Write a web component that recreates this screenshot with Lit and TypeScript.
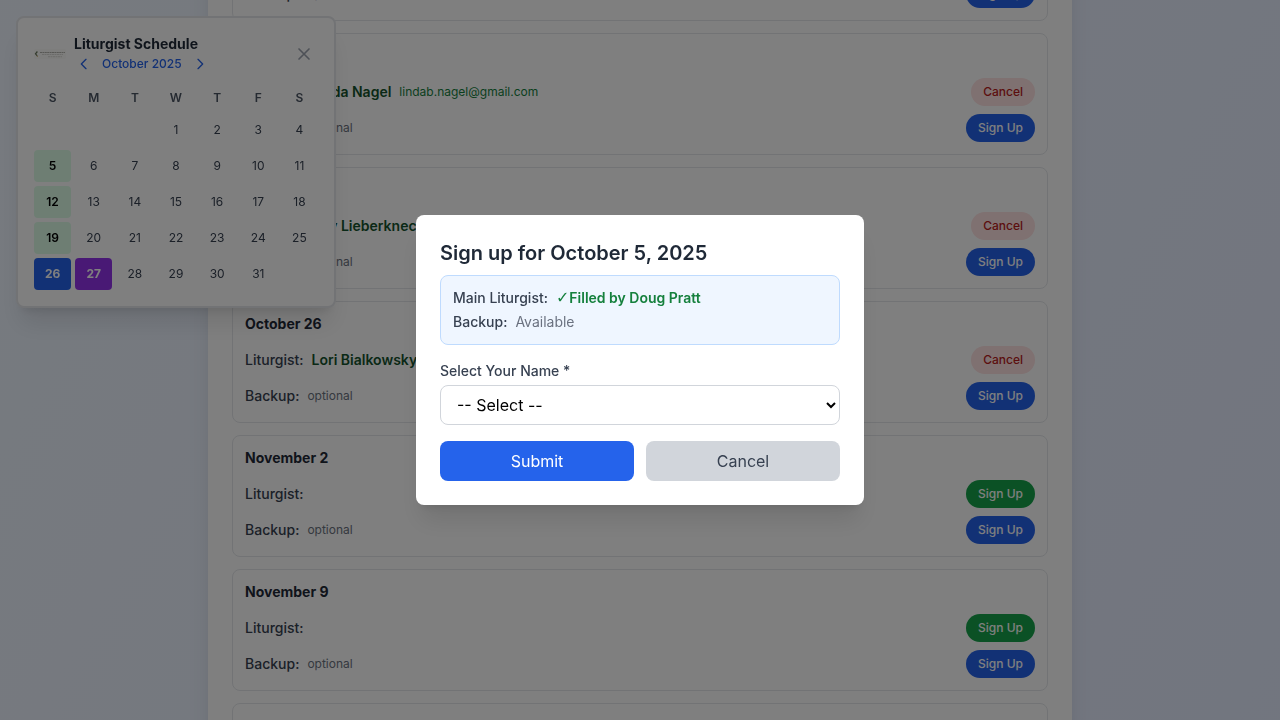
import { LitElement, html, css, svg, nothing } from "lit";
import { customElement, property, query, state } from "lit/decorators.js";
import { classMap } from "lit/directives/class-map.js";

interface Service {
  date: string;
  liturgist?: string;
  email?: string;
}

const SERVICES: Service[] = [
  { date: "October 5", liturgist: "Doug Pratt" },
  { date: "October 12", liturgist: "Linda Nagel", email: "lindab.nagel@gmail.com" },
  { date: "October 19", liturgist: "Kay Lieberknecht" },
  { date: "October 26", liturgist: "Lori Bialkowsky" },
  { date: "November 2" },
  { date: "November 9" },
  { date: "November 16" },
];

const shared = css`
  *,
  *::before,
  *::after {
    box-sizing: border-box;
  }
  h1,
  h2,
  h3,
  p {
    margin: 0;
  }
  button,
  select {
    font: inherit;
    margin: 0;
    cursor: pointer;
  }
  button {
    border: 0;
    padding: 0;
    background: none;
  }
`;

@customElement("service-card")
class ServiceCard extends LitElement {
  @property({ attribute: false }) service!: Service;

  static styles = [
    shared,
    css`
      :host {
        display: block;
        padding: 12px;
        border: 1px solid #e5e7eb;
        border-radius: 8px;
        font-size: 14px;
        line-height: 20px;
      }
      .date {
        margin-bottom: 12px;
        font-size: 14px;
        font-weight: 700;
        color: #1f2937;
      }
      .row {
        display: flex;
        align-items: center;
        gap: 8px;
        min-height: 28px;
      }
      .row + .row {
        margin-top: 8px;
      }
      .role {
        font-weight: 500;
        color: #374151;
      }
      .name {
        font-weight: 600;
        color: #14532d;
      }
      .email {
        font-size: 12px;
        color: #15803d;
      }
      .optional {
        font-size: 12px;
        color: #6b7280;
      }
      .action {
        margin-left: auto;
        padding: 6px 12px;
        border-radius: 999px;
        font-size: 12px;
        line-height: 16px;
        font-weight: 500;
        color: #ffffff;
      }
      .cancel {
        background: #fee2e2;
        color: #b91c1c;
      }
      .main {
        background: #16a34a;
      }
      .backup {
        background: #2563eb;
      }
    `,
  ];

  render() {
    const { date, liturgist, email } = this.service;
    return html`
      <h3 class="date">${date}</h3>
      <div class="row">
        <span class="role">Liturgist:</span>
        ${liturgist ? html`<span class="name">${liturgist}</span>` : nothing}
        ${email ? html`<span class="email">${email}</span>` : nothing}
        ${liturgist
          ? html`<button class="action cancel">Cancel</button>`
          : html`<button class="action main">Sign Up</button>`}
      </div>
      <div class="row">
        <span class="role">Backup:</span>
        <span class="optional">optional</span>
        <button class="action backup">Sign Up</button>
      </div>
    `;
  }
}

@customElement("month-calendar")
class MonthCalendar extends LitElement {
  static styles = [
    shared,
    css`
      :host {
        display: block;
        padding: 16px;
        background: #ffffff;
        border: 2px solid #e5e7eb;
        border-radius: 8px;
        box-shadow: 0 20px 25px -5px rgba(0, 0, 0, 0.1),
          0 8px 10px -6px rgba(0, 0, 0, 0.1);
      }
      .head {
        display: flex;
        align-items: center;
        gap: 8px;
        margin-bottom: 12px;
      }
      .logo {
        display: block;
        width: 32px;
        height: 10px;
      }
      .titles {
        flex: 1;
      }
      .title {
        font-size: 14px;
        line-height: 20px;
        font-weight: 700;
        color: #1f2937;
      }
      .month {
        display: flex;
        align-items: center;
        gap: 8px;
        font-size: 12px;
        line-height: 16px;
        font-weight: 500;
        color: #2563eb;
      }
      .icon {
        display: block;
        fill: none;
        stroke: currentColor;
        stroke-width: 2;
        stroke-linecap: round;
        stroke-linejoin: round;
      }
      .nav {
        padding: 2px;
        color: #2563eb;
      }
      .nav .icon {
        width: 16px;
        height: 16px;
      }
      .close {
        padding: 4px;
        color: #9ca3af;
      }
      .close .icon {
        width: 20px;
        height: 20px;
      }
      .grid {
        display: grid;
        grid-template-columns: repeat(7, 1fr);
        gap: 4px;
        font-size: 12px;
        line-height: 16px;
        text-align: center;
      }
      .weekday {
        padding: 4px 0;
        font-weight: 600;
        color: #4b5563;
      }
      .day {
        height: 32px;
        border-radius: 4px;
        color: #374151;
      }
      .filled {
        background: #dcfce7;
        color: #000000;
        font-weight: 600;
      }
      .selected {
        background: #2563eb;
        color: #ffffff;
        font-weight: 700;
      }
      .today {
        background: #9333ea;
        color: #ffffff;
        font-weight: 700;
      }
    `,
  ];

  render() {
    const offset = 3;
    const days = Array.from({ length: 31 }, (_, i) => i + 1);
    return html`
      <div class="head">
        <svg class="logo" viewBox="0 0 32 10" aria-hidden="true">
          ${svg`
            <rect width="32" height="10" rx="2" fill="#fafaf8" />
            <path d="M3.400 2.500 1.500 4.800l1.700 2" fill="none" stroke="#66755a" stroke-width="1.200" />
            <path d="M2.800 7 4 7.600" fill="none" stroke="#c9a45c" stroke-width=".8" />
            <path d="M6 3.500h25" stroke="#b0b0ab" stroke-width="1" stroke-dasharray="2 .4" />
            <path d="M8 5.500h21M14 7.700h14" stroke="#cfcfca" stroke-width=".8" stroke-dasharray="2 .5" />
          `}
        </svg>
        <div class="titles">
          <h2 class="title">Liturgist Schedule</h2>
          <div class="month">
            <button class="nav" aria-label="Previous month">
              <svg class="icon" viewBox="0 0 24 24"><path d="M15 19l-7-7 7-7" /></svg>
            </button>
            <span>October 2025</span>
            <button class="nav" aria-label="Next month">
              <svg class="icon" viewBox="0 0 24 24"><path d="M9 5l7 7-7 7" /></svg>
            </button>
          </div>
        </div>
        <button class="close" aria-label="Close calendar">
          <svg class="icon" viewBox="0 0 24 24"><path d="M6 18L18 6M6 6l12 12" /></svg>
        </button>
      </div>
      <div class="grid">
        ${["S", "M", "T", "W", "T", "F", "S"].map((d) => html`<div class="weekday">${d}</div>`)}
        ${Array.from({ length: offset }, () => html`<span></span>`)}
        ${days.map(
          (d) => html`<button
            class=${classMap({
              day: true,
              filled: [5, 12, 19].includes(d),
              selected: d === 26,
              today: d === 27,
            })}
          >${d}</button>`
        )}
      </div>
    `;
  }
}

@customElement("signup-dialog")
class SignupDialog extends LitElement {
  static styles = [
    shared,
    css`
      :host {
        display: block;
        padding: 24px;
        background: #ffffff;
        border-radius: 8px;
        box-shadow: 0 20px 25px -5px rgba(0, 0, 0, 0.1),
          0 8px 10px -6px rgba(0, 0, 0, 0.1);
        font-size: 14px;
        line-height: 20px;
      }
      .title {
        margin-bottom: 8px;
        font-size: 20px;
        line-height: 28px;
        font-weight: 600;
        color: #1f2937;
      }
      .status {
        display: grid;
        gap: 4px;
        margin-bottom: 16px;
        padding: 12px;
        background: #eff6ff;
        border: 1px solid #bfdbfe;
        border-radius: 8px;
      }
      .line {
        display: flex;
        gap: 8px;
      }
      .role {
        font-weight: 500;
        color: #374151;
      }
      .filled {
        display: flex;
        font-weight: 600;
        color: #15803d;
      }
      .check {
        font-family: "DejaVu Sans", sans-serif;
        font-size: 16px;
        font-weight: 700;
      }
      .free {
        color: #6b7280;
      }
      .label {
        display: block;
        margin-bottom: 4px;
        font-weight: 500;
        color: #374151;
      }
      .select {
        display: block;
        width: 100%;
        height: 40px;
        margin-bottom: 16px;
        padding: 8px 12px;
        border: 1px solid #d1d5db;
        border-radius: 8px;
        background: #ffffff;
        color: #000000;
        font-size: 16px;
      }
      .actions {
        display: flex;
        gap: 12px;
      }
      .button {
        flex: 1;
        padding: 8px 16px;
        border-radius: 8px;
        font-size: 16px;
        line-height: 24px;
      }
      .submit {
        background: #2563eb;
        color: #ffffff;
      }
      .cancel {
        background: #d1d5db;
        color: #374151;
      }
    `,
  ];

  render() {
    return html`
      <h2 class="title">Sign up for October 5, 2025</h2>
      <div class="status">
        <p class="line">
          <span class="role">Main Liturgist:</span>
          <span class="filled"><span class="check">✓</span> <span>Filled by Doug Pratt</span></span>
        </p>
        <p class="line">
          <span class="role">Backup:</span>
          <span class="free">Available</span>
        </p>
      </div>
      <label class="label" for="person">Select Your Name *</label>
      <select class="select" id="person">
        <option>-- Select --</option>
      </select>
      <div class="actions">
        <button class="button submit">Submit</button>
        <button class="button cancel">Cancel</button>
      </div>
    `;
  }
}

@customElement("app-root")
class AppRoot extends LitElement {
  @state() private services = SERVICES;
  @query(".page") private page!: HTMLElement;

  static styles = [
    shared,
    css`
      :host {
        display: block;
        font-family: Inter, "Liberation Sans", sans-serif;
      }
      .page {
        height: 100vh;
        padding: 0 24px;
        overflow-y: auto;
        scrollbar-width: none;
        background: linear-gradient(to bottom right, #eff6ff, #e0e7ff) 0 -240px /
          100% 2560px;
      }
      .sheet {
        display: grid;
        gap: 12px;
        max-width: 864px;
        margin: 0 auto;
        padding: 24px;
        background: #ffffff;
        box-shadow: 0 20px 25px -5px rgba(0, 0, 0, 0.1),
          0 8px 10px -6px rgba(0, 0, 0, 0.1);
      }
      .calendar {
        position: fixed;
        top: 16px;
        left: 16px;
        width: 320px;
      }
      .overlay {
        position: fixed;
        inset: 0;
        display: flex;
        align-items: center;
        justify-content: center;
        padding: 16px;
        background: rgba(0, 0, 0, 0.5);
      }
      .dialog {
        width: 100%;
        max-width: 448px;
      }
    `,
  ];

  /* Opens the list with the tail of the first service still in view. */
  async firstUpdated() {
    const cards = [...this.renderRoot.querySelectorAll("service-card")] as LitElement[];
    await Promise.all(cards.map((c) => c.updateComplete));
    this.page.scrollTop = 125;
  }

  render() {
    return html`
      <div class="page">
        <main class="sheet">
          ${this.services.map((s) => html`<service-card .service=${s}></service-card>`)}
        </main>
      </div>
      <month-calendar class="calendar"></month-calendar>
      <div class="overlay">
        <signup-dialog class="dialog" role="dialog" aria-modal="true" aria-label="Sign up"></signup-dialog>
      </div>
    `;
  }
}
